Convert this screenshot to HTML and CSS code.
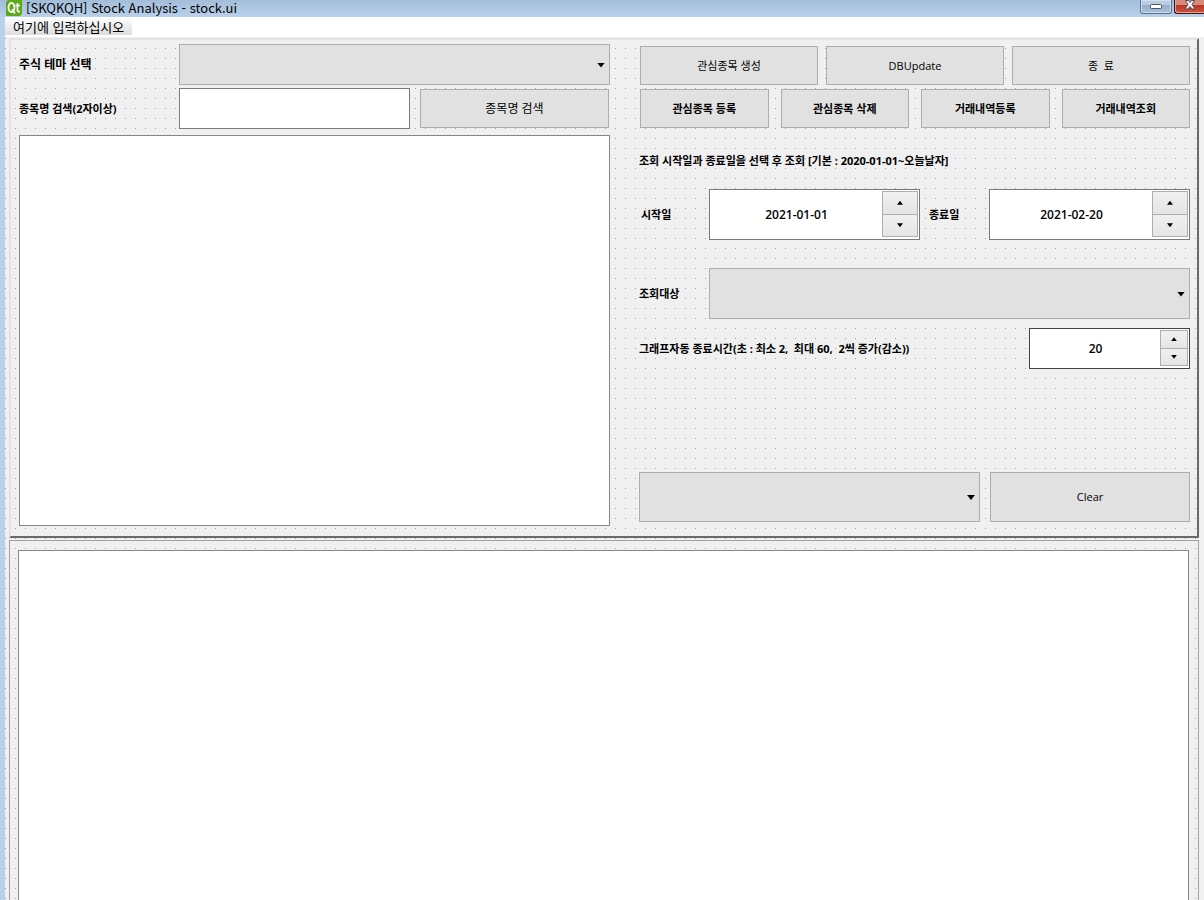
FILE: index.html
```html
<!DOCTYPE html>
<html lang="ko">
  <head>
    <meta charset="UTF-8" />
    <meta name="viewport" content="width=device-width, initial-scale=1.0" />
    <title>Stock Analysis</title>
    <link rel="stylesheet" href="styles.css">
  </head>

  <body>
    <header class="titlebar">
      <svg class="logo" width="16" height="16" viewBox="0 0 16 16" aria-hidden="true">
        <path d="M2 0H16V14L14 16H0V2Z" fill="#5caa15" />
        <ellipse cx="5.5" cy="7.5" rx="3" ry="4.5" fill="none" stroke="#fff" stroke-width="1.8" />
        <path d="M6 9.5L9 13.5M11.5 3V10.5Q11.5 12 14 11.5M9.5 5.5H14" fill="none" stroke="#fff" stroke-width="1.7" />
      </svg>
      <h1 class="title">[SKQKQH] Stock Analysis - stock.ui</h1>
      <div class="window-buttons">
        <button class="win-btn" type="button" aria-label="최소화">
          <svg width="12" height="5" viewBox="0 0 12 5"><rect x=".5" y=".5" width="11" height="4" rx="1" fill="#fff" stroke="#4b5263" /></svg>
        </button>
        <button class="win-btn close" type="button" aria-label="닫기">
          <svg width="12" height="10" viewBox="0 0 12 10"><path d="M1.5 .5H4.5L6 2.5 7.5 .5H10.5L8 4.5 11 9H8L6 6.5 4 9H1L4 4.5Z" fill="#fff" stroke="#4b4a5b" /></svg>
        </button>
      </div>
    </header>

    <div class="window">
      <nav class="menubar">
        <a class="menu-item" href="#">여기에 입력하십시오</a>
      </nav>

      <main class="form">
        <section class="panel raised">
          <div class="left">
            <div class="row">
              <label class="label large" for="theme">주식 테마 선택</label>
              <div class="combo"><select id="theme"></select></div>
            </div>
            <div class="row">
              <label class="label" for="keyword">종목명 검색(2자이상)</label>
              <input class="keyword" id="keyword" type="text" />
              <button class="btn search" type="button">종목명 검색</button>
            </div>
            <div class="list"></div>
          </div>

          <div class="right">
            <div class="buttons">
              <button class="btn" type="button">관심종목 생성</button>
              <button class="btn" type="button">DBUpdate</button>
              <button class="btn" type="button">종&nbsp; 료</button>
            </div>
            <div class="buttons four">
              <button class="btn bold" type="button">관심종목 등록</button>
              <button class="btn bold" type="button">관심종목 삭제</button>
              <button class="btn bold" type="button">거래내역등록</button>
              <button class="btn bold" type="button">거래내역조회</button>
            </div>
            <p class="label guide">조회 시작일과 종료일을 선택 후 조회 [기본 : 2020-01-01~오늘날자]</p>

            <div class="fields dates">
              <label class="label" for="start">시작일</label>
              <div class="spin">
                <input id="start" type="text" value="2021-01-01" />
                <div class="steps">
                  <button class="step up" type="button" aria-label="시작일 증가"></button>
                  <button class="step down" type="button" aria-label="시작일 감소"></button>
                </div>
              </div>
              <label class="label" for="end">종료일</label>
              <div class="spin">
                <input id="end" type="text" value="2021-02-20" />
                <div class="steps">
                  <button class="step up" type="button" aria-label="종료일 증가"></button>
                  <button class="step down" type="button" aria-label="종료일 감소"></button>
                </div>
              </div>
            </div>

            <div class="fields target">
              <label class="label" for="target">조회대상</label>
              <div class="combo"><select id="target"></select></div>
            </div>

            <div class="fields timer">
              <label class="label" for="seconds">그래프자동 종료시간(초 : 최소 2,&nbsp; 최대 60,&nbsp; 2씩 증가(감소))</label>
              <div class="spin small">
                <input id="seconds" type="text" value="20" />
                <div class="steps">
                  <button class="step up" type="button" aria-label="초 증가"></button>
                  <button class="step down" type="button" aria-label="초 감소"></button>
                </div>
              </div>
            </div>

            <div class="fields bottom">
              <div class="combo"><select aria-label="목록 선택"></select></div>
              <button class="btn" type="button">Clear</button>
            </div>
          </div>
        </section>

        <section class="panel sunken">
          <div class="output"></div>
        </section>
      </main>
    </div>
  </body>
</html>
```

FILE: styles.css
```css
* {
  box-sizing: border-box;
}

body {
  display: flex;
  flex-direction: column;
  min-height: 100vh;
  margin: 0;
  font-family: 'Open Sans', 'Noto Sans CJK KR', sans-serif;
  font-size: 12px;
  line-height: 16px;
  color: #000;
  background: #bad1ea;
}

button,
input,
select {
  margin: 0;
  padding: 0;
  border-radius: 0;
  font: inherit;
  color: inherit;
}

/* title bar */
.titlebar {
  display: flex;
  height: 17px;
  padding-left: 6px;
  background: linear-gradient(#a3bdd9, #b9d1ea);
}

.title {
  margin: 0 0 0 4px;
  font-family: 'Noto Sans CJK KR', sans-serif;
  font-size: 13px;
  font-weight: 400;
  line-height: 16px;
}

.window-buttons {
  display: flex;
  gap: 2px;
  margin-left: auto;
  overflow: hidden;
}

.win-btn {
  display: flex;
  justify-content: center;
  width: 32px;
  height: 14px;
  padding-top: 4px;
  border: 1px solid #5d7188;
  border-top: 0;
  border-radius: 0 0 3px 3px;
  background: linear-gradient(#b9cde2 35%, #94aecb 40%, #a9c2dd);
  box-shadow: inset 0 0 0 1px #cfdfef;
}

/* runs off the right edge of the window */
.win-btn.close {
  width: 30px;
  padding-top: 0;
  border-color: #46121a;
  border-right: 0;
  border-bottom-right-radius: 0;
  background: linear-gradient(#d78a79 35%, #b9371f 40%, #cf5540);
  box-shadow: inset 1px -1px #e0a496;
}

/* window body */
.window {
  flex: 1;
  display: flex;
  flex-direction: column;
  margin-left: 5px;
  background: #f0f0f0;
}

.menubar {
  display: flex;
  height: 20px;
  background: #fff;
}

.menu-item {
  height: 18px;
  padding: 0 8px;
  font-family: 'Noto Sans CJK KR', sans-serif;
  font-size: 13px;
  line-height: 19px;
  color: #000;
  text-decoration: none;
  background: linear-gradient(#fff, #dcdcdc);
}

/* designer grid, one dot every 10px */
.form {
  flex: 1;
  display: flex;
  flex-direction: column;
  padding: 1px 5px 0 4px;
  background: conic-gradient(from 270deg at 1px 1px, #a0a0a0 90deg, transparent 0) 0 1px / 10px 10px;
}

.panel {
  border: 2px solid;
}

.panel.raised {
  display: grid;
  grid-template-columns: 591fr 551fr;
  column-gap: 29px;
  height: 500px;
  padding: 4px 7px 10px 8px;
  border-color: #e3e3e3 #696969 #696969 #e3e3e3;
}

.panel.sunken {
  flex: 1;
  display: flex;
  margin-top: 2px;
  padding: 9px 9px 0 8px;
  border-width: 1px 1px 0;
  border-color: #a0a0a0;
}

.label {
  margin: 0;
  font-size: 11px;
  font-weight: 700;
  white-space: nowrap;
}

.label.large {
  font-size: 12px;
}

/* left side */
.left {
  display: flex;
  flex-direction: column;
  gap: 3px;
}

.row {
  display: flex;
  align-items: center;
  height: 41px;
}

.row .label {
  width: 160px;
}

.row .combo {
  flex: 1;
}

.keyword {
  flex: 1;
  min-width: 0;
  height: 41px;
  padding: 0 6px;
  border: 1px solid #7a7a7a;
  background: #fff;
}

.list {
  flex: 1;
  margin-top: 3px;
  border: 1px solid #828790;
  background: #fff;
}

.output {
  flex: 1;
  border: 1px solid #828790;
  border-bottom: 0;
  background: #fff;
}

/* controls */
.btn {
  height: 39px;
  border: 1px solid #adadad;
  font-size: 11px;
  background: #e1e1e1;
}

.btn.bold {
  font-weight: 700;
}

.btn.search {
  width: 189px;
  margin: 0 1px 0 10px;
  font-size: 12px;
}

.combo {
  position: relative;
  height: 100%;
}

.combo select {
  display: block;
  width: 100%;
  height: 100%;
  border: 1px solid #adadad;
  appearance: none;
  background: #e1e1e1;
}

.combo::after {
  content: '';
  position: absolute;
  top: 50%;
  right: 5px;
  width: 8px;
  height: 5px;
  margin-top: -2px;
  background: #000;
  clip-path: polygon(0 0, 100% 0, 50% 100%);
  pointer-events: none;
}

.spin {
  display: flex;
  height: 100%;
  padding: 1px;
  border: 1px solid #7a7a7a;
  background: #fff;
}

.spin input {
  flex: 1;
  min-width: 0;
  border: 0;
  font-weight: 600;
  text-align: center;
  background: transparent;
}

.steps {
  display: flex;
  flex-direction: column;
  width: 36px;
  padding-bottom: 1px;
}

.step {
  flex: 1;
  display: flex;
  align-items: center;
  justify-content: center;
  border: 1px solid #adadad;
  background: linear-gradient(#f0f0f0, #e5e5e5);
}

.step.down {
  border-top: 0;
}

.step::before {
  content: '';
  width: 6px;
  height: 4px;
  background: #000;
  clip-path: polygon(50% 0, 100% 100%, 0 100%);
}

.step.down::before {
  clip-path: polygon(0 0, 100% 0, 50% 100%);
}

.spin.small {
  border-color: #444;
}

.small .steps {
  width: 28px;
}

/* right side */
.right {
  display: flex;
  flex-direction: column;
}

.buttons {
  display: grid;
  grid-template-columns: repeat(3, 1fr);
  gap: 8px;
  margin: 2px 0 4px 1px;
}

.buttons.four {
  grid-template-columns: repeat(4, 1fr);
  gap: 12px;
  margin: 0 0 0 1px;
}

.guide {
  margin: 25px 0 20px;
}

.fields {
  display: grid;
  align-items: center;
}

.dates {
  grid-template-columns: 70px 211fr 69px 201fr;
  height: 51px;
}

.dates .label {
  padding-left: 2px;
}

.dates .spin + .label {
  padding-left: 9px;
}

.target {
  grid-template-columns: 70px 1fr;
  height: 51px;
  margin-top: 28px;
}

.timer {
  grid-template-columns: 1fr 161px;
  height: 41px;
  margin-top: 9px;
}

.bottom {
  grid-template-columns: 341fr 200fr;
  gap: 10px;
  height: 50px;
  margin-top: auto;
  margin-bottom: 4px;
}

.bottom .btn {
  height: 100%;
}
```
